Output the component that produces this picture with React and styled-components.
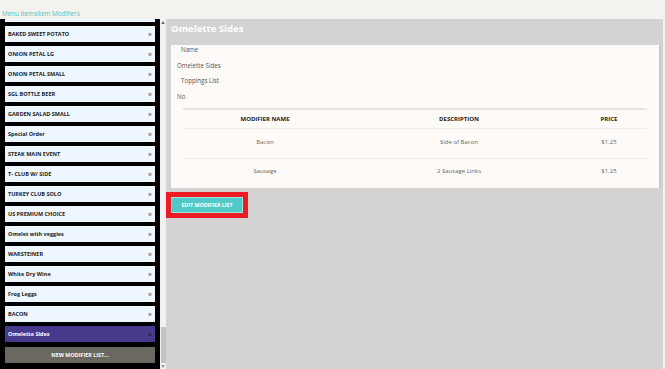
import styled, { createGlobalStyle } from "styled-components";

const GlobalStyle = createGlobalStyle`
  html, body { margin: 0; padding: 0; height: 100%; }
  body {
    background: #f3f2ee;
    font-family: "Open Sans", "Noto Sans", sans-serif;
    overflow: hidden;
  }
  #root { height: 100%; }
`;

const lists = [
  "BAKED SWEET POTATO",
  "ONION PETAL LG",
  "ONION PETAL SMALL",
  "SGL BOTTLE BEER",
  "GARDEN SALAD SMALL",
  "Special Order",
  "STEAK MAIN EVENT",
  "T- CLUB W/ SIDE",
  "TURKEY CLUB SOLO",
  "US PREMIUM CHOICE",
  "Omelet with veggies",
  "WARSTEINER",
  "White Dry Wine",
  "Frog Leggs",
  "BACON",
  "Omelette Sides",
];

const modifiers = [
  { name: "Bacon", description: "Side of Bacon", price: "$1.25" },
  { name: "Sausage", description: "2 Sausage Links", price: "$1.25" },
];

const Page = styled.div`
  height: 100vh;
  display: flex;
  flex-direction: column;
`;

const Breadcrumb = styled.div`
  height: 19px;
  box-sizing: border-box;
  padding: 9px 0 0 2px;
  font-size: 6.3px;
  line-height: 10px;
  color: #4fc4c6;
`;

const Body = styled.div`
  flex: 1;
  min-height: 0;
  display: flex;
`;

const Sidebar = styled.div`
  width: 160px;
  flex-shrink: 0;
  box-sizing: border-box;
  background: #000;
  padding: 0 5px 6px;
  display: flex;
  flex-direction: column;
  justify-content: flex-end;
  gap: 4px;
  overflow: hidden;
`;

/* bottom edge of the item scrolled out above the list */
const Peek = styled.div`
  height: 3px;
  flex-shrink: 0;
  background: #eef6ff;
`;

const ListItem = styled.div`
  height: 16px;
  flex-shrink: 0;
  display: flex;
  align-items: center;
  justify-content: space-between;
  padding: 0 3px;
  background: ${(p) => (p.$active ? "#463a8c" : "#eef6ff")};
  color: ${(p) => (p.$active ? "#fff" : "#222")};
  font-size: 5.5px;
  font-weight: 700;
`;

const Close = styled.span`
  font-size: 7.5px;
  font-weight: 700;
  color: ${(p) => (p.$active ? "#2a2a2a" : "#7a7a7a")};
`;

const NewButton = styled.div`
  height: 16px;
  flex-shrink: 0;
  margin-top: 1px;
  display: flex;
  align-items: center;
  justify-content: center;
  background: #6b6761;
  color: #fff;
  font-size: 5.4px;
  font-weight: 700;
`;

const Scrollbar = styled.div`
  width: 6px;
  flex-shrink: 0;
  background: #f1f1f1;
  display: flex;
  flex-direction: column;
  align-items: center;
`;

const Arrow = styled.div`
  height: 6px;
  display: flex;
  align-items: center;
  justify-content: center;
`;

const Track = styled.div`
  flex: 1;
`;

const Thumb = styled.div`
  width: 5px;
  height: 36px;
  background: #c4c4c4;
`;

const Main = styled.div`
  flex: 1;
  margin-right: 2px;
  background: #d3d3d3;
  display: flex;
  flex-direction: column;
  align-items: flex-start;
`;

const Title = styled.div`
  height: 26px;
  box-sizing: border-box;
  padding: 4px 5px 0;
  color: #fff;
  font-size: 9.6px;
  font-weight: 700;
  line-height: 12px;
`;

const Card = styled.div`
  align-self: stretch;
  margin: 0 4px 0 5px;
  padding: 0 12px 0 6px;
  background: #fdfaf8;
  box-shadow: 2px 0 0 #c9c9c9;
`;

const Field = styled.div`
  font-size: 6.2px;
  line-height: 10px;
  margin-top: ${(p) => (p.$first ? "0" : "5.7px")};
  padding-left: ${(p) => (p.$label ? "4px" : "0")};
  color: #555;
`;

const Table = styled.div`
  margin: 6px 0 0 6px;
  border-top: 2px solid #e8e6e5;
  display: grid;
  grid-template-columns: 164fr 224fr 76fr;
`;

const HeadCell = styled.div`
  height: 19px;
  box-sizing: border-box;
  padding-top: 4.5px;
  text-align: center;
  line-height: 8px;
  border-bottom: 1px solid #efecf2;
  font-size: 6px;
  font-weight: 700;
  color: #222;
`;

const Cell = styled.div`
  height: 29.5px;
  box-sizing: border-box;
  padding-top: 8.5px;
  text-align: center;
  line-height: 8px;
  border-bottom: ${(p) => (p.$last ? "none" : "1px solid #f0edee")};
  font-size: 6px;
  color: #666;
`;

const Actions = styled.div`
  padding-top: 3.5px;
`;

const Highlight = styled.div`
  border: 5px solid #ed1c24;
`;

const EditButton = styled.div`
  width: 72px;
  height: 16px;
  box-sizing: border-box;
  border: 1px solid #9fe3df;
  background: #50c9c7;
  color: #fff;
  display: flex;
  align-items: center;
  justify-content: center;
  font-size: 5.3px;
  font-weight: 700;
`;

export default function App() {
  const selected = "Omelette Sides";
  return (
    <Page>
      <GlobalStyle />
      <Breadcrumb>Menu ItemsItem Modifiers</Breadcrumb>
      <Body>
        <Sidebar>
          <Peek />
          {lists.map((name) => (
            <ListItem key={name} $active={name === selected}>
              <span>{name}</span>
              <Close $active={name === selected}>×</Close>
            </ListItem>
          ))}
          <NewButton>NEW MODIFIER LIST...</NewButton>
        </Sidebar>
        <Scrollbar>
          <Arrow>
            <svg width="4" height="3" viewBox="0 0 4 3">
              <path d="M0 3 L2 0 L4 3 Z" fill="#777" />
            </svg>
          </Arrow>
          <Track />
          <Thumb />
          <Arrow>
            <svg width="4" height="3" viewBox="0 0 4 3">
              <path d="M0 0 L4 0 L2 3 Z" fill="#999" />
            </svg>
          </Arrow>
        </Scrollbar>
        <Main>
          <Title>Omelette Sides</Title>
          <Card>
            <Field $label $first>Name</Field>
            <Field>Omelette Sides</Field>
            <Field $label>Toppings List</Field>
            <Field>No</Field>
            <Table>
              <HeadCell>MODIFIER NAME</HeadCell>
              <HeadCell>DESCRIPTION</HeadCell>
              <HeadCell>PRICE</HeadCell>
              {modifiers.map((m, i) => {
                const last = i === modifiers.length - 1;
                return [
                  <Cell key={m.name + "n"} $last={last}>{m.name}</Cell>,
                  <Cell key={m.name + "d"} $last={last}>{m.description}</Cell>,
                  <Cell key={m.name + "p"} $last={last}>{m.price}</Cell>,
                ];
              })}
            </Table>
          </Card>
          <Actions>
            <Highlight>
              <EditButton>EDIT MODIFIER LIST</EditButton>
            </Highlight>
          </Actions>
        </Main>
      </Body>
    </Page>
  );
}
